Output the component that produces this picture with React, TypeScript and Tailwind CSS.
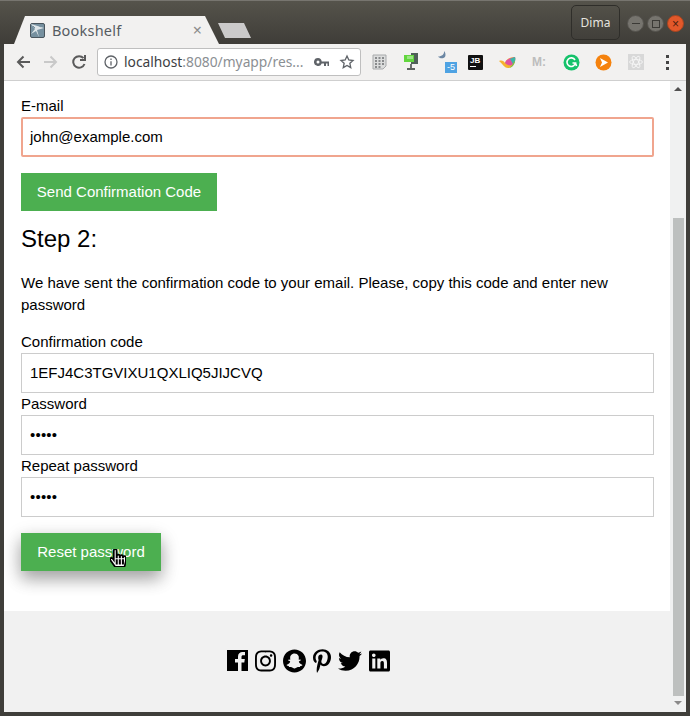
import React from "react";
import { FaInstagram, FaSnapchat, FaPinterestP, FaTwitter, FaLinkedin, FaHandPointer } from "react-icons/fa";

const Field = ({ label, value, focus, mask }: { label: string; value: string; focus?: boolean; mask?: boolean }) => (
  <div>
    <div className="h-[22px] leading-[22px] text-[15px] text-black">{label}</div>
    <div className={`h-10 flex items-center px-2 bg-white text-[15px] text-black ${focus ? "border-2 border-[#f0a58e] rounded-[2px] pl-[7px]" : "border border-[#cccccc]"}`}>
      {mask ? <span className="tracking-[0.2px] text-[15px]">•••••</span> : value}
    </div>
  </div>
);

const Back = ({ muted }: { muted?: boolean }) => (
  <svg width="14" height="14" viewBox="0 0 14 14" fill="none" stroke={muted ? "#c9c9c9" : "#5a5a5a"} strokeWidth="2" className={muted ? "rotate-180" : ""}>
    <path d="M14 7H2M7.500 1.500L2 7l5.500 5.500" />
  </svg>
);

export default function App() {
  return (
    <div className="w-[690px] h-[716px] overflow-hidden bg-[#3f3e3a] flex flex-col font-['Liberation_Sans',Arial,sans-serif]">
      {/* title bar */}
      <div className="h-11 shrink-0 relative flex border-t border-[#77756f] bg-gradient-to-b from-[#55534b] to-[#3f3d38]">
        <div className="absolute left-[14px] bottom-0 w-[205px] h-[28px] bg-[#f2f1f0] [clip-path:polygon(0_100%,11px_0,191px_0,100%_100%)]" />
        <div className="absolute left-[30px] top-[19px] flex items-center w-[172px]">
          <svg width="15" height="15" viewBox="0 0 15 15" className="shrink-0">
            <rect x="0.5" y="0.5" width="14" height="14" rx="1.500" fill="#76909f" stroke="#4a555d" />
            <path d="M1 1l13 4-7 2 2 7-3-6-5 3 4-5z" fill="#dfe6e9" />
            <path d="M8 2l3 2M3 3l2 2" stroke="#76909f" strokeWidth="1" />
          </svg>
          <span className="ml-[7px] font-['Noto_Sans',sans-serif] text-[14.500px] leading-[20px] tracking-[0.2px] text-[#565c62]">Bookshelf</span>
          <span className="ml-auto text-[#8b8b8b] font-['Noto_Sans',sans-serif] text-[16px] leading-[20px]">×</span>
        </div>
        <div className="absolute left-[218px] top-[22px] w-[33px] h-[15px] bg-[#cbcaca] [clip-path:polygon(0_0,26px_0,100%_100%,7px_100%)]" />
        <div className="ml-auto mr-[70px] mt-[4px] w-[49px] h-[35px] border border-[#2f2e2a] rounded-[5px] flex items-center justify-center text-[#e6e4df] text-[12px] font-['Noto_Sans',sans-serif]">Dima</div>
        <div className="absolute right-[6px] top-[14px] flex gap-[3px]">
          <div className="w-[17px] h-[17px] rounded-full bg-[#76746e] border border-[#55534e] flex items-center justify-center"><div className="w-2 h-[1px] bg-[#3b3a36]" /></div>
          <div className="w-[17px] h-[17px] rounded-full bg-[#76746e] border border-[#55534e] flex items-center justify-center"><div className="w-2 h-2 border border-[#3b3a36]" /></div>
          <div className="w-[17px] h-[17px] rounded-full bg-[#e2582a] border border-[#a84520] flex items-center justify-center text-[#4a2010] text-[12px] leading-none">×</div>
        </div>
      </div>

      {/* toolbar + page */}
      <div className="flex-1 min-h-0 mx-1 mb-1 flex flex-col bg-white">
        <div className="h-[36px] shrink-0 bg-[#f2f1f0] border-b border-[#cfcfcf] box-content flex items-center relative">
          <div className="ml-[12px] flex"><Back /></div>
          <div className="ml-[14px] flex"><Back muted /></div>
          <svg className="ml-[14px]" width="14" height="14" viewBox="0 0 14 14" fill="none" stroke="#5a5a5a" strokeWidth="2">
            <path d="M12.500 9A5.800 5.800 0 1 1 11.500 3.200M13 0v5H8" />
          </svg>
          <div className="ml-[11px] w-[264px] h-[28px] shrink-0 bg-white border border-[#bfbfbf] rounded-[3px] flex items-center pl-[6px]">
            <svg width="14" height="14" viewBox="0 0 14 14" fill="none" stroke="#5f6368" strokeWidth="1.300" className="shrink-0">
              <circle cx="7" cy="7" r="6" />
              <path d="M7 6.200V10.500M7 3.400V5" />
            </svg>
            <span className="ml-[6px] font-['Noto_Sans',sans-serif] text-[13.800px] text-[#3c4043] whitespace-nowrap">localhost<span className="text-[#8b8f93]">:8080/myapp/res...</span></span>
            <svg className="ml-auto mr-[10px] shrink-0" width="15" height="9" viewBox="0 0 15 9" fill="#5f6368">
              <path d="M4 0a4 4 0 1 0 3.700 5.500H10V8h2V5.500h1.500V8H15V3.500H7.700A4 4 0 0 0 4 0zm0 2.500a1.500 1.500 0 1 1 0 3 1.500 1.500 0 0 1 0-3z" />
            </svg>
            <svg className="mr-[5px] shrink-0" width="16" height="16" viewBox="0 0 24 24" fill="none" stroke="#5f6368" strokeWidth="2">
              <path d="M12 3l2.700 6 6.300.700-4.700 4.300 1.300 6.500L12 17.200 6.400 20.500l1.300-6.500L3 9.700 9.300 9z" />
            </svg>
          </div>
          {/* extensions */}
          <svg className="ml-[11px] shrink-0" width="15" height="16" viewBox="0 0 15 16">
            <path d="M1 1h13v11l-3 3H1z" fill="#dcdddd" stroke="#a8aaac" />
            <path d="M3 4h2M6.500 4h2M10 4h2M3 7h2M6.500 7h2M10 7h2M3 10h2M6.500 10h2M10 10h2M3 13h2M6.500 13h2" stroke="#6d7073" strokeWidth="1.500" />
          </svg>
          <svg className="ml-[16px] shrink-0 mb-[1px]" width="16" height="17" viewBox="0 0 16 17">
            <rect x="8" y="0" width="7" height="11" fill="#4f5f58" />
            <path d="M1 2h10v7H1z" fill="#62d63e" />
            <path d="M4 3h6v3H4z" fill="#9ce585" />
            <path d="M8 11v4M4 16h8" stroke="#5f6361" strokeWidth="1.800" />
          </svg>
          <div className="ml-[19px] relative w-[20px] h-[22px] shrink-0 mb-[1px]">
            <svg width="8" height="8" viewBox="0 0 8 8" className="absolute left-0 top-0">
              <path d="M6 0c.5 3-2 5.500-6 5.500C1.500 7.500 5 8 7 6c1-2 .5-4.500-1-6z" fill="#6b86a3" />
            </svg>
            <div className="absolute left-[7px] top-[11px] w-[12px] h-[11px] bg-[#4fa3e3] text-white text-[9px] leading-[11px] text-center">-5</div>
          </div>
          <div className="ml-[10px] w-[15px] h-[15px] shrink-0 bg-[#111] rounded-[1px] text-white text-[8px] leading-[9px] font-bold pl-[2px] pt-[1px]">JB<div className="w-[6px] h-[1px] bg-white mt-[1px]" /></div>
          <svg className="ml-[16px] shrink-0" width="17" height="13" viewBox="0 0 17 13">
            <path d="M0 5c3-1 5 0 6 2 1-3 4-6 10-6 1 5-2 11-7 11C5 12 3 7 0 5z" fill="#f6b22e" />
            <path d="M6 7c1-3 4-5 10-6 1 3-1 6-3 8-2 1-5 0-7-2z" fill="#e0509e" />
            <path d="M11 3c2-1 4-2 5-2 1 3 0 5-2 7z" fill="#3cb7a6" />
            <path d="M9 12c2 0 5-3 6-7l1 1c-1 3-3 6-7 6z" fill="#7cc04a" />
          </svg>
          <span className="ml-[16px] w-[15px] shrink-0 text-[12px] font-bold text-[#bdbdbd] leading-none whitespace-nowrap">M:</span>
          <svg className="ml-[16px] shrink-0" width="17" height="17" viewBox="0 0 17 17">
            <circle cx="8.500" cy="8.500" r="8" fill="#15c26b" />
            <path d="M12 6a4.300 4.300 0 1 0 .5 3H9.500M12.500 9l1 3" stroke="#fff" strokeWidth="1.600" fill="none" />
          </svg>
          <svg className="ml-[15px] shrink-0" width="17" height="17" viewBox="0 0 17 17">
            <circle cx="8.500" cy="8.500" r="8" fill="#f5820d" />
            <path d="M5 4l8 4.500L5 13l2-4.500z" fill="#fff" />
          </svg>
          <div className="ml-[16px] w-[16px] h-[16px] shrink-0 bg-[#d8d8d8] flex items-center justify-center">
            <svg width="14" height="14" viewBox="-12 -12 24 24" fill="none" stroke="#f6f6f6" strokeWidth="1.500">
              <ellipse rx="11" ry="4.200" />
              <ellipse rx="11" ry="4.200" transform="rotate(60)" />
              <ellipse rx="11" ry="4.200" transform="rotate(120)" />
            </svg>
          </div>
          <div className="ml-[22px] flex flex-col gap-[3px] shrink-0">
            <div className="w-[3px] h-[3px] bg-[#444]" />
            <div className="w-[3px] h-[3px] bg-[#444]" />
            <div className="w-[3px] h-[3px] bg-[#444]" />
          </div>
        </div>

        <div className="flex-1 min-h-0 flex">
          <div className="flex-1 min-w-0 flex flex-col">
            <div className="flex-1 pl-[17px] pr-[16px] pt-[14px]">
              <Field label="E-mail" value="john@example.com" focus />
              <button className="mt-4 h-[38px] w-[196px] bg-[#4caf50] text-white text-[15px]">Send Confirmation Code</button>
              <h2 className="mt-[14px] text-[24px] leading-[28px] text-black">Step 2:</h2>
              <p className="mt-[19px] text-[15px] leading-[22px] text-black">We have sent the confirmation code to your email. Please, copy this code and enter new password</p>
              <div className="mt-[15px] flex flex-col">
                <Field label="Confirmation code" value="1EFJ4C3TGVIXU1QXLIQ5JIJCVQ" />
                <Field label="Password" value="" mask />
                <Field label="Repeat password" value="" mask />
              </div>
              <div className="relative mt-4 w-[140px]">
                <button className="h-[38px] w-[140px] bg-[#4caf50] text-white text-[15px] shadow-[0_8px_16px_rgba(0,0,0,0.24),0_6px_20px_rgba(0,0,0,0.19)]">Reset password</button>
                <FaHandPointer className="absolute left-[89px] top-[16px] w-[16px] h-[18px] text-white" stroke="#000" strokeWidth={50} />
              </div>
            </div>
            <div className="h-[101px] shrink-0 bg-[#f1f1f1] flex items-center justify-center gap-[7px] pr-[57px] pb-[2px] text-black">
              <svg width="21" height="21" viewBox="0 0 21 21" className="shrink-0">
                <rect width="21" height="21" fill="#000" />
                <path d="M11 21V12.500H8V9h3V6.500C11 3.500 13 2 15.500 2H18v3.200h-1.800C15 5.200 14.500 5.800 14.500 7V9h3.300l-.5 3.500h-2.800V21z" fill="#f1f1f1" />
              </svg>
              <FaInstagram className="h-[24px] w-[21px] shrink-0" />
              <FaSnapchat className="h-[24px] w-[23px] shrink-0" />
              <FaPinterestP className="h-[24px] w-[18px] shrink-0" />
              <FaTwitter className="h-[24px] w-[24px] shrink-0" />
              <FaLinkedin className="h-[24px] w-[21px] shrink-0" />
            </div>
          </div>
          {/* scrollbar */}
          <div className="w-[16px] shrink-0 bg-[#f0f1f1] flex flex-col items-center">
            <div className="mt-[6px] w-0 h-0 border-x-[4px] border-x-transparent border-b-[4px] border-b-[#505050]" />
            <div className="mt-[127px] w-[11px] h-[478px] bg-[#bdc0bf]" />
            <div className="mt-[5px] w-0 h-0 border-x-[4px] border-x-transparent border-t-[4px] border-t-[#8a8a8a]" />
          </div>
        </div>
      </div>
    </div>
  );
}
